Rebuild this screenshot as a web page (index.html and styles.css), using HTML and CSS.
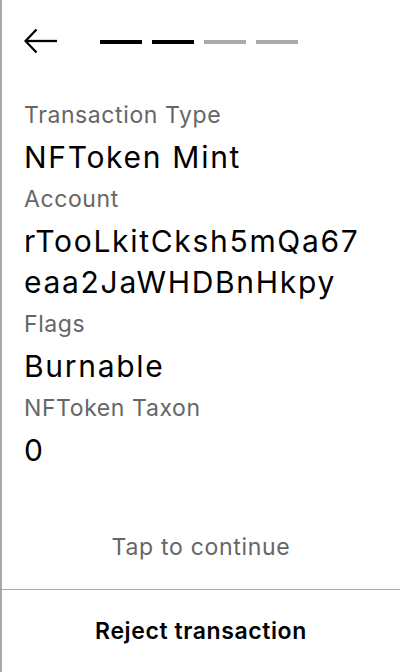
FILE: index.html
```html
<!DOCTYPE html>
<html lang="en">
<head>
<meta charset="utf-8">
<title>Review transaction</title>
<link rel="stylesheet" href="styles.css">
</head>
<body>
<div class="screen">
  <main class="main">
    <header class="header">
      <button class="back" aria-label="Back">
        <svg width="34" height="28" viewBox="0 0 34 28" fill="none" stroke="#000" stroke-width="2.3" stroke-linecap="butt" stroke-linejoin="miter">
          <path d="M1.5 13 H33"/>
          <path d="M12.5 1.5 L1.5 13 L12.5 24.5"/>
        </svg>
      </button>
      <div class="steps">
        <span class="step done"></span>
        <span class="step done"></span>
        <span class="step"></span>
        <span class="step"></span>
      </div>
    </header>
    <section class="fields">
      <div class="label">Transaction Type</div>
      <div class="value">NFToken Mint</div>
      <div class="label">Account</div>
      <div class="value break">rTooLkitCksh5mQa67eaa2JaWHDBnHkpy</div>
      <div class="label">Flags</div>
      <div class="value">Burnable</div>
      <div class="label">NFToken Taxon</div>
      <div class="value">0</div>
    </section>
    <div class="tap">Tap to continue</div>
  </main>
  <footer class="footer">
    <button class="reject">Reject transaction</button>
  </footer>
</div>
</body>
</html>
```

FILE: styles.css
```css
html, body {
  margin: 0;
  padding: 0;
  background: #fff;
}

body {
  font-family: Inter, "Noto Sans", sans-serif;
  color: #000;
}

.screen {
  height: 672px;
  box-sizing: border-box;
  border-left: 2px solid #a8a8a8;
  display: flex;
  flex-direction: column;
}

.main {
  flex: 1;
  display: flex;
  flex-direction: column;
}

.header {
  height: 84px;
  box-sizing: border-box;
  padding: 0 22px;
  display: flex;
  align-items: center;
}

.back {
  border: 0;
  background: none;
  padding: 0;
  margin: 0;
  width: 34px;
  height: 28px;
  display: flex;
}

.steps {
  margin-left: 42px;
  display: flex;
  gap: 10px;
  align-items: center;
}

.step {
  width: 42px;
  height: 4px;
  background: #aaaaaa;
  display: block;
}

.step.done {
  background: #000;
}

.fields {
  padding: 10px 22px 0;
}

.label {
  font-size: 23px;
  line-height: 43px;
  letter-spacing: 0.6px;
  color: #666;
}

.value {
  font-size: 30px;
  line-height: 41px;
  letter-spacing: 1.7px;
  color: #000;
}

.value.break {
  word-break: break-all;
  max-width: 342px;
}

.tap {
  margin-top: auto;
  text-align: center;
  font-size: 23px;
  line-height: 32px;
  letter-spacing: 0.7px;
  color: #666;
  padding-bottom: 26px;
}

.footer {
  border-top: 1px solid #aaaaaa;
  height: 83px;
  box-sizing: border-box;
  display: flex;
}

.reject {
  flex: 1;
  border: 0;
  background: none;
  font-family: Inter, "Noto Sans", sans-serif;
  font-size: 23px;
  font-weight: 600;
  letter-spacing: 0.6px;
  color: #000;
  padding: 0;
}
```
